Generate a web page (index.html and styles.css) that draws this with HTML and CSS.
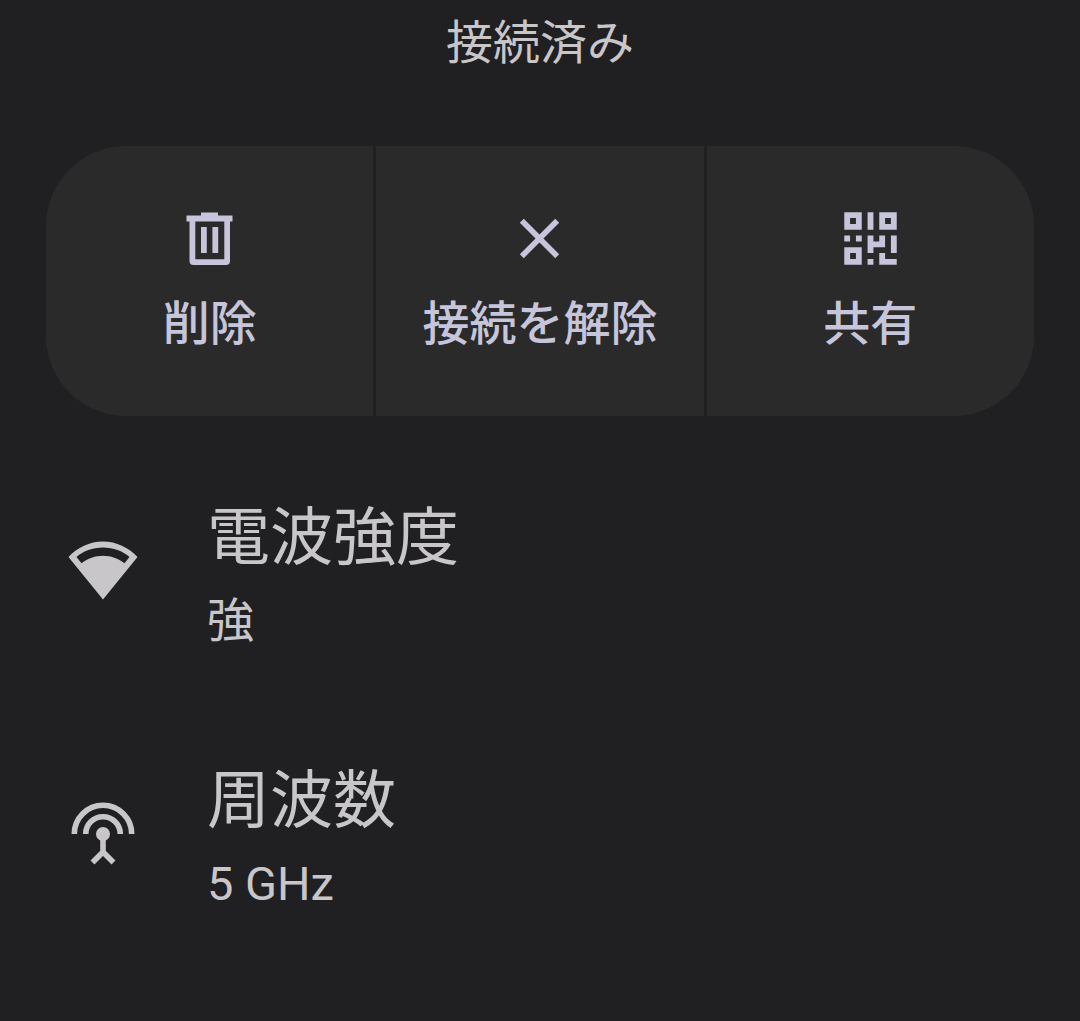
FILE: index.html
```html
<!DOCTYPE html>
<html lang="ja">
<head>
<meta charset="utf-8">
<meta name="viewport" content="width=device-width, initial-scale=1">
<title>ネットワークの詳細</title>
<link rel="stylesheet" href="styles.css">
</head>
<body>
<main class="page">
  <p class="status">接続済み</p>
  <div class="actions">
    <button type="button" class="action">
      <svg class="action-icon" viewBox="0 0 63 63" aria-hidden="true">
        <path d="M23 5.500h17v3h14.500v6H52V54a4 4 0 0 1-4 4H15.500a4 4 0 0 1-4-4V14.500H8.500v-6H23zM17.300 14.500v37.700h29V14.500z" fill-rule="evenodd"/>
        <path d="M23 20h5.800v26H23zM34.400 20h5.800v26h-5.800z"/>
      </svg>
      <span>削除</span>
    </button>
    <button type="button" class="action">
      <svg class="action-icon" viewBox="0.800 0.800 22.400 22.400" aria-hidden="true">
        <path d="M19 6.410 17.590 5 12 10.590 6.410 5 5 6.410 10.590 12 5 17.590 6.410 19 12 13.410 17.590 19 19 17.590 13.410 12z"/>
      </svg>
      <span>接続を解除</span>
    </button>
    <button type="button" class="action">
      <svg class="action-icon" viewBox="-0.900 -0.900 10.800 10.800" aria-hidden="true">
        <path d="M0 0h3v3H0zM1 1v1h1V1zM6 0h3v3H6zM7 1v1h1V1zM0 6h3v3H0zM1 7v1h1V7z" fill-rule="evenodd"/>
        <path d="M4 0h1v3H4zM0 4h1v1H0zM2 4h1v1H2zM4 4h1v1h1V4h1v2H5v1H4zM8 4h1v3H8zM4 8h1v1H4zM6 7h1v1h2v1H6z"/>
      </svg>
      <span>共有</span>
    </button>
  </div>
  <ul class="details">
    <li class="detail">
      <svg class="detail-icon" viewBox="0 0 72 72" aria-hidden="true">
        <path d="M36 7.500C22.500 7.500 10.500 13.500 1.500 23L36 65.500 70.500 23C61.500 13.500 49.500 7.500 36 7.500zM36 13.500c10.500 0 19.500 3.500 26.500 9.500l-5 6.300C51 24.500 44 21.800 36 21.800S21 24.500 14.500 29.300l-5-6.300c7-6 16-9.500 26.500-9.500z" fill-rule="evenodd"/>
      </svg>
      <div class="detail-text">
        <h2 class="detail-title">電波強度</h2>
        <p class="detail-value">強</p>
      </div>
    </li>
    <li class="detail">
      <svg class="detail-icon" viewBox="0 0 72 72" aria-hidden="true">
        <path d="M7.300 37a28.700 28.700 0 0 1 57.400 0M18.700 37a17.300 17.300 0 0 1 34.600 0M36 37v19M25.500 65.500 36 55l10.500 10.500" fill="none" stroke="currentColor" stroke-width="5.600"/>
        <circle cx="36" cy="37" r="7"/>
      </svg>
      <div class="detail-text">
        <h2 class="detail-title">周波数</h2>
        <p class="detail-value">5 GHz</p>
      </div>
    </li>
  </ul>
</main>
</body>
</html>
```
FILE: styles.css
```css
* {
  box-sizing: border-box;
}

body {
  margin: 0;
  min-height: 100vh;
  background: #202022;
  color: #c8c6c9;
  font-family: Roboto, "Noto Sans CJK JP", sans-serif;
  font-size: 47px;
  line-height: 70px;
}

.page {
  padding: 8px 46px 48px;
}

.status {
  margin: 0 0 68px;
  text-align: center;
}

.actions {
  display: grid;
  grid-template-columns: repeat(3, 1fr);
  gap: 3px;
  border-radius: 80px;
  overflow: hidden;
}

.action {
  display: flex;
  flex-direction: column;
  align-items: center;
  gap: 19px;
  margin: 0;
  padding: 61px 0 57px;
  border: 0;
  background: #2a2a2a;
  color: #c6c5db;
  font: inherit;
  font-weight: 500;
  white-space: nowrap;
}

.action-icon {
  width: 63px;
  height: 63px;
  fill: currentColor;
}

.details {
  display: grid;
  gap: 99px;
  margin: 0;
  padding: 76px 21px 0;
  list-style: none;
}

.detail {
  display: flex;
  align-items: center;
  gap: 68px;
}

.detail-icon {
  flex: none;
  width: 72px;
  height: 72px;
  margin-bottom: 8px;
  fill: currentColor;
}

.detail-title {
  margin: 0;
  font-size: 63px;
  font-weight: 400;
  line-height: 92px;
}

.detail-value {
  margin: 2px 0 0;
}
```
